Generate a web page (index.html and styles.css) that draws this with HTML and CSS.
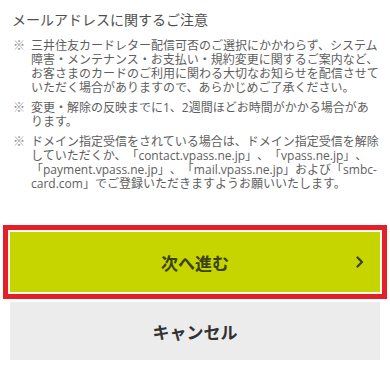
FILE: index.html
```html
<!DOCTYPE html>
<html lang="ja">
<head>
<meta charset="utf-8">
<title>メールアドレスに関するご注意</title>
<link rel="stylesheet" href="styles.css">
</head>
<body>
<div class="page">
  <h2 class="title">メールアドレスに関するご注意</h2>
  <ul class="notes">
    <li class="note"><span class="mark">※</span><span class="text">三井住友カードレター配信可否のご選択にかかわらず、システム<br>障害・メンテナンス・お支払い・規約変更に関するご案内など、<br>お客さまのカードのご利用に関わる大切なお知らせを配信させて<br>いただく場合がありますので、あらかじめご了承ください。</span></li>
    <li class="note"><span class="mark">※</span><span class="text">変更・解除の反映までに1、2週間ほどお時間がかかる場合があ<br>ります。</span></li>
    <li class="note"><span class="mark">※</span><span class="text">ドメイン指定受信をされている場合は、ドメイン指定受信を解除<br>していただくか、「contact.vpass.ne.jp」、「vpass.ne.jp」、<br>「payment.vpass.ne.jp」、「mail.vpass.ne.jp」および「smbc-<br>card.com」でご登録いただきますようお願いいたします。</span></li>
  </ul>
  <div class="actions">
    <div class="highlight">
      <button class="btn btn-next" type="button">
        <span class="btn-label">次へ進む</span>
        <svg class="chev" width="8" height="12" viewBox="0 0 8 12" aria-hidden="true"><path d="M1.5 1.5 L6 6 L1.5 10.5" fill="none" stroke="#3a4212" stroke-width="2.2" stroke-linecap="round" stroke-linejoin="round"/></svg>
      </button>
    </div>
    <button class="btn btn-cancel" type="button"><span class="btn-label">キャンセル</span></button>
  </div>
</div>
</body>
</html>
```

FILE: styles.css
```css
* { box-sizing: border-box; }
html, body { margin: 0; padding: 0; background: #ffffff; }
body {
  font-family: "Open Sans", "Noto Sans CJK JP", sans-serif;
  color: #555555;
  text-spacing-trim: space-all;
}
.page {
  padding: 9px 10px 0 10px;
}
.title {
  margin: 0;
  padding-left: 2px;
  font-size: 14px;
  line-height: 20px;
  font-weight: normal;
  color: #4f4f4f;
  font-family: "Noto Sans CJK JP", sans-serif;
}
.notes {
  list-style: none;
  margin: 10px 0 0 0;
  padding: 0 0 0 3px;
  display: flex;
  flex-direction: column;
  gap: 6px;
}
.note {
  display: flex;
  font-size: 12px;
  line-height: 14px;
  color: #5e5e5e;
  white-space: nowrap;
}
.mark {
  flex: 0 0 18px;
  color: #8a8a8a;
}
.actions {
  margin-top: 34px;
  display: flex;
  flex-direction: column;
  gap: 3px;
}
.highlight {
  margin: 0 -7px;
  border: 5px solid #e3202a;
  padding: 2px;
  background: #fdfbe9;
}
.btn {
  display: flex;
  align-items: center;
  justify-content: center;
  position: relative;
  width: 100%;
  height: 60px;
  border: none;
  margin: 0;
  padding: 0;
  font-family: "Noto Sans CJK JP", sans-serif;
  font-size: 17px;
  font-weight: bold;
  cursor: pointer;
}
.btn-next {
  background: #c6d400;
  color: #3a4212;
}
.btn-cancel {
  height: 58px;
  background: #ececec;
  color: #333333;
}
.chev {
  position: absolute;
  right: 16px;
  top: 24px;
}
```
